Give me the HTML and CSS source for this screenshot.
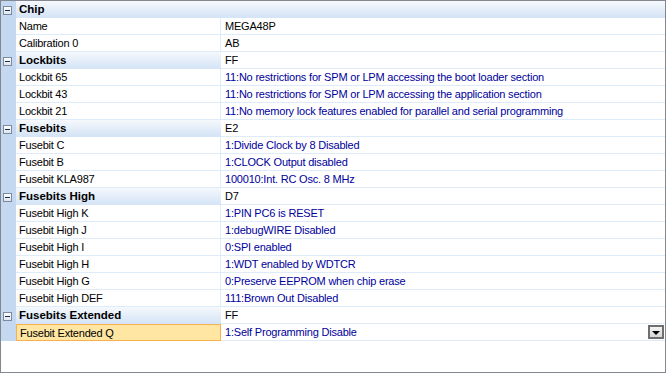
FILE: index.html
```html
<!DOCTYPE html>
<html lang="en">
  <head>
    <meta charset="UTF-8" />
    <title>Device Properties</title>
    <link rel="stylesheet" href="styles.css">
  </head>
  <body>
    <div class="property-grid">
      <div class="row category">
        <div class="margin"><span class="toggle"></span></div>
        <div class="name wide">Chip</div>
      </div>
      <div class="row">
        <div class="margin"></div>
        <div class="name">Name</div>
        <div class="value plain">MEGA48P</div>
      </div>
      <div class="row">
        <div class="margin"></div>
        <div class="name">Calibration 0</div>
        <div class="value plain">AB</div>
      </div>

      <div class="row category">
        <div class="margin"><span class="toggle"></span></div>
        <div class="name">Lockbits</div>
        <div class="value plain">FF</div>
      </div>
      <div class="row">
        <div class="margin"></div>
        <div class="name">Lockbit 65</div>
        <div class="value">11:No restrictions for SPM or LPM accessing the boot loader section</div>
      </div>
      <div class="row">
        <div class="margin"></div>
        <div class="name">Lockbit 43</div>
        <div class="value">11:No restrictions for SPM or LPM accessing the application section</div>
      </div>
      <div class="row">
        <div class="margin"></div>
        <div class="name">Lockbit 21</div>
        <div class="value">11:No memory lock features enabled for parallel and serial programming</div>
      </div>

      <div class="row category">
        <div class="margin"><span class="toggle"></span></div>
        <div class="name">Fusebits</div>
        <div class="value plain">E2</div>
      </div>
      <div class="row">
        <div class="margin"></div>
        <div class="name">Fusebit C</div>
        <div class="value">1:Divide Clock by 8 Disabled</div>
      </div>
      <div class="row">
        <div class="margin"></div>
        <div class="name">Fusebit B</div>
        <div class="value">1:CLOCK Output disabled</div>
      </div>
      <div class="row">
        <div class="margin"></div>
        <div class="name">Fusebit KLA987</div>
        <div class="value">100010:Int. RC Osc. 8 MHz</div>
      </div>

      <div class="row category">
        <div class="margin"><span class="toggle"></span></div>
        <div class="name">Fusebits High</div>
        <div class="value plain">D7</div>
      </div>
      <div class="row">
        <div class="margin"></div>
        <div class="name">Fusebit High K</div>
        <div class="value">1:PIN PC6 is RESET</div>
      </div>
      <div class="row">
        <div class="margin"></div>
        <div class="name">Fusebit High J</div>
        <div class="value">1:debugWIRE Disabled</div>
      </div>
      <div class="row">
        <div class="margin"></div>
        <div class="name">Fusebit High I</div>
        <div class="value">0:SPI enabled</div>
      </div>
      <div class="row">
        <div class="margin"></div>
        <div class="name">Fusebit High H</div>
        <div class="value">1:WDT enabled by WDTCR</div>
      </div>
      <div class="row">
        <div class="margin"></div>
        <div class="name">Fusebit High G</div>
        <div class="value">0:Preserve EEPROM when chip erase</div>
      </div>
      <div class="row">
        <div class="margin"></div>
        <div class="name">Fusebit High DEF</div>
        <div class="value">111:Brown Out Disabled</div>
      </div>

      <div class="row category">
        <div class="margin"><span class="toggle"></span></div>
        <div class="name">Fusebits Extended</div>
        <div class="value plain">FF</div>
      </div>
      <div class="row selected">
        <div class="margin"></div>
        <div class="name">Fusebit Extended Q</div>
        <div class="value">
          <span>1:Self Programming Disable</span>
          <span class="dropdown"></span>
        </div>
      </div>
    </div>
  </body>
</html>
```

FILE: styles.css
```css
body {
  margin: 0;
  font-family: "Liberation Sans", Arial, sans-serif;
  font-size: 11px;
  letter-spacing: -0.2px;
  color: #000;
  background-color: #fff;
}

.property-grid {
  width: 666px;
  height: 373px;
  box-sizing: border-box;
  border: 1px solid #828790;
  background-color: #fff;
  background-image: linear-gradient(#c4d8f1, #c4d8f1);
  background-size: 15px 340px;
  background-repeat: no-repeat;
}

.row {
  display: grid;
  grid-template-columns: 15px 205px 1fr;
  height: 17px;
}

.margin {
  display: flex;
  align-items: center;
  justify-content: center;
  padding-right: 3px;
  padding-top: 1px;
  box-sizing: border-box;
  background-color: #c4d8f1;
}

.name,
.value {
  display: flex;
  align-items: center;
  box-sizing: border-box;
  border-bottom: 1px solid #deebf8;
  white-space: nowrap;
  overflow: hidden;
}

.name {
  padding-left: 3px;
  border-right: 1px solid #deebf8;
}

.value {
  padding-left: 4px;
  padding-right: 1px;
  color: #00009c;
  justify-content: space-between;
}

.value.plain {
  color: #000;
}

.category .name {
  font-weight: bold;
  font-size: 11.5px;
  letter-spacing: 0;
  background: linear-gradient(#f6f9fd 0%, #eaf1fa 35%, #d5e4f6 100%);
  border-bottom: 1px solid #d5e4f6;
  border-right: none;
}

.category .name.wide {
  grid-column: 2 / 4;
}

.toggle {
  position: relative;
  width: 9px;
  height: 9px;
  box-sizing: border-box;
  border: 1px solid #7b8aa0;
  background: linear-gradient(#ffffff, #dfe6ee);
}

.toggle::after {
  content: "";
  position: absolute;
  left: 1px;
  top: 3px;
  width: 5px;
  height: 1px;
  background-color: #1b2b4a;
}

.selected .name {
  background-color: #ffe6a3;
  border: 1px solid #f7b04d;
}

.dropdown {
  position: relative;
  width: 16px;
  height: 14px;
  box-sizing: border-box;
  border: 2px solid #6f6f6f;
  background: linear-gradient(#f4f4f4, #d6d6d6);
}

.dropdown::after {
  content: "";
  position: absolute;
  left: 2px;
  top: 4px;
  border-left: 4px solid transparent;
  border-right: 4px solid transparent;
  border-top: 4px solid #000;
}
```
